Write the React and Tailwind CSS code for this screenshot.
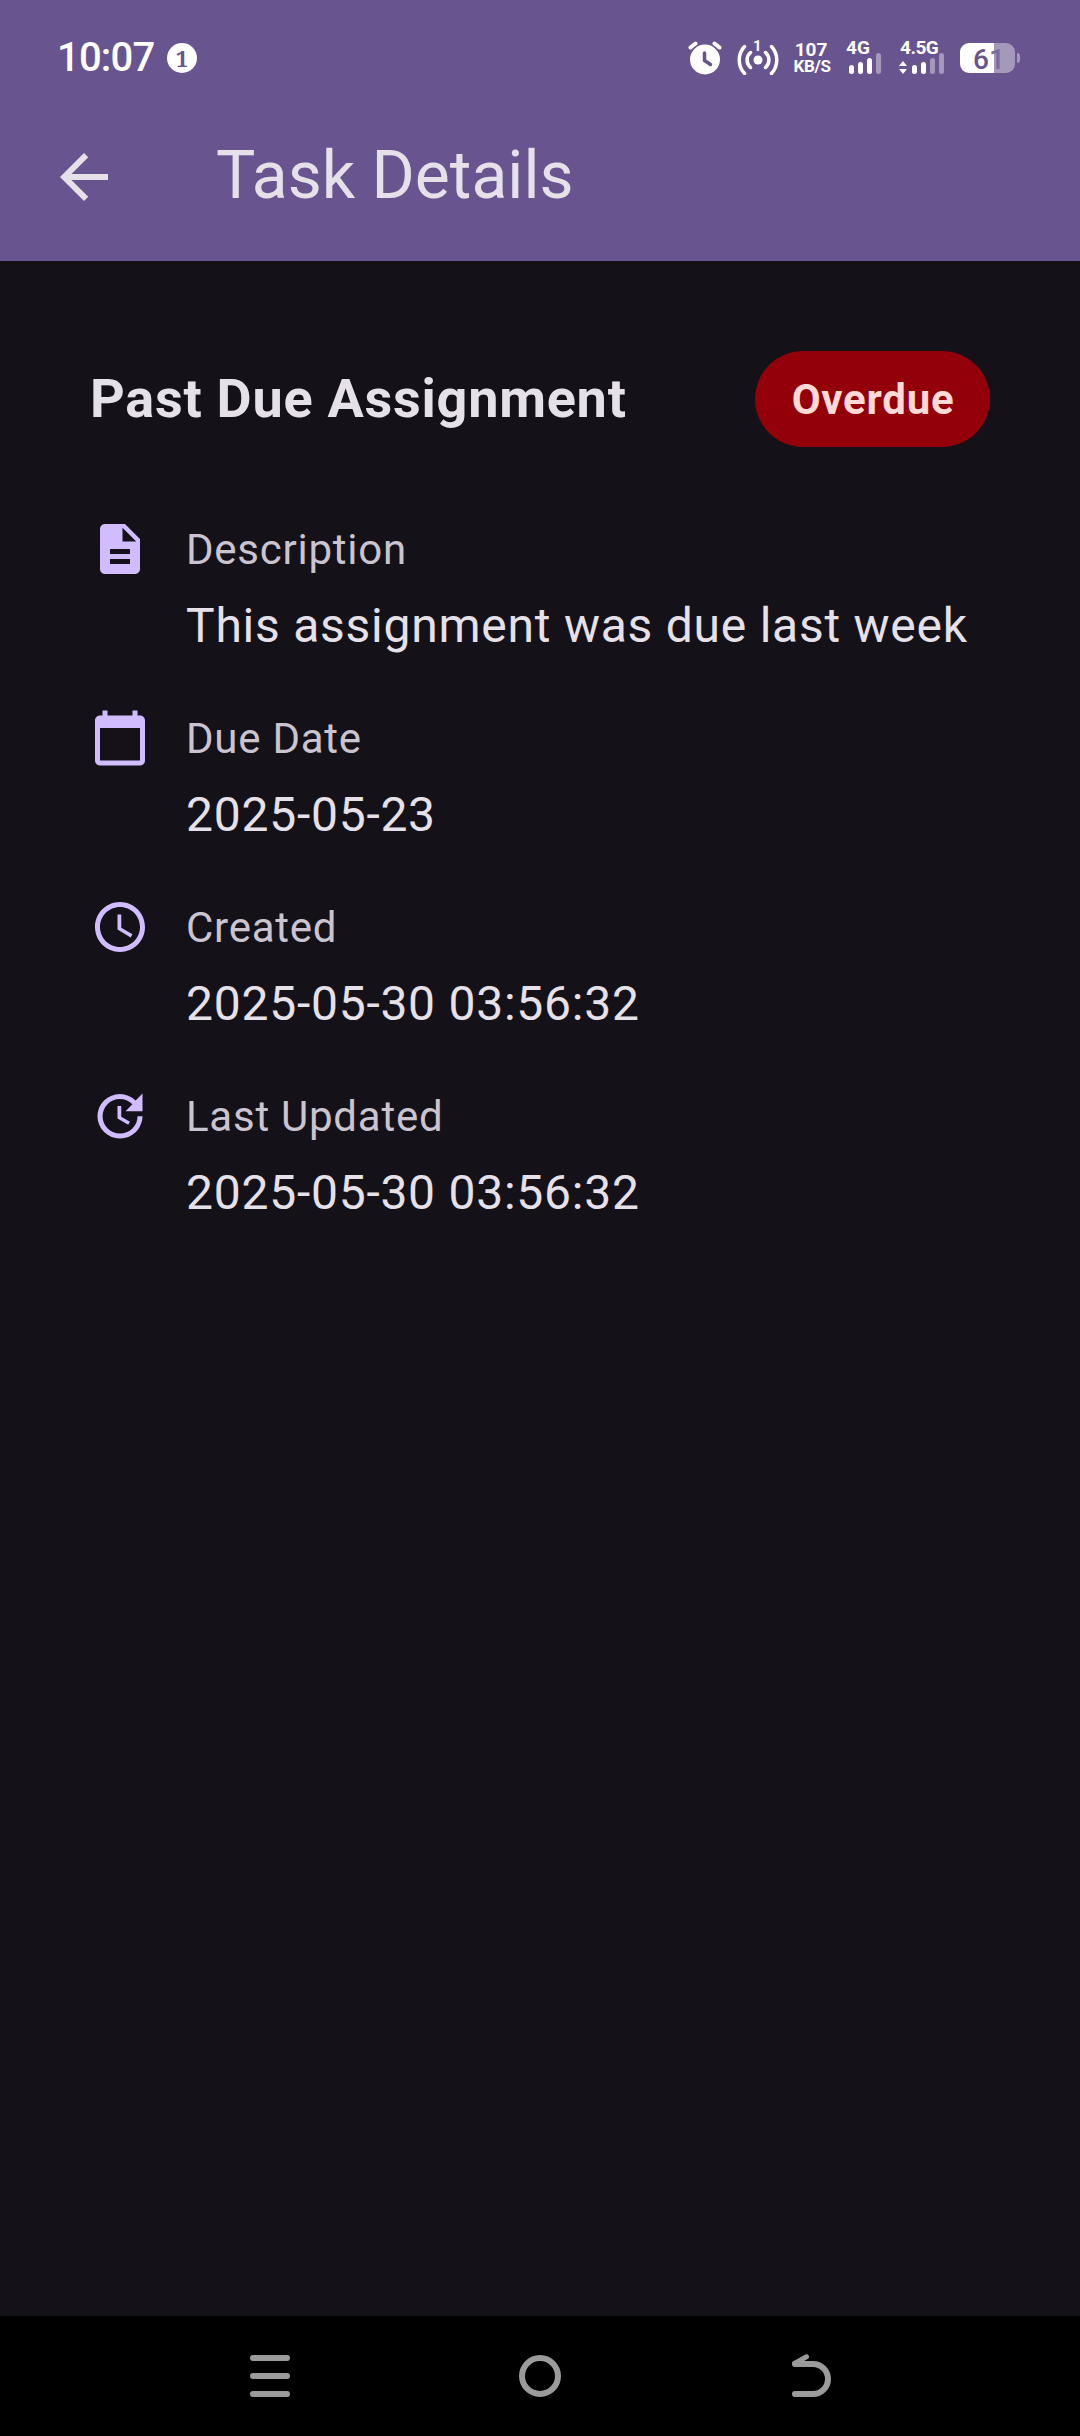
import React from "react";

const Icon = ({ d, className }) => (
  <svg viewBox="0 0 24 24" className={className} fill="currentColor">
    <path d={d} />
  </svg>
);

const ARROW = "M20 11H7.83l5.59-5.59L12 4l-8 8 8 8 1.41-1.41L7.83 13H20z";
const DOC = "M14 2H6c-1.1 0-1.99.9-1.99 2L4 20c0 1.1.89 2 1.99 2H18c1.1 0 2-.9 2-2V8zm2 16H8v-2h8zm0-4H8v-2h8zm-3-5V3.5L18.5 9z";
const CALENDAR = "M20 3h-1V1h-2v2H7V1H5v2H4c-1.100 0-2 .9-2 2v16c0 1.100.9 2 2 2h16c1.100 0 2-.9 2-2V5c0-1.100-.9-2-2-2zm0 18H4V8h16z";
const CLOCK = "M11.990 2C6.470 2 2 6.480 2 12s4.470 10 9.990 10C17.520 22 22 17.520 22 12S17.520 2 11.990 2zM12 20c-4.420 0-8-3.580-8-8s3.580-8 8-8 8 3.580 8 8-3.580 8-8 8zM12.500 7H11v6l5.250 3.150.750-1.230-4.500-2.670z";
const UPDATE = "M21 10.120h-6.780l2.740-2.820c-2.730-2.700-7.150-2.800-9.880-.100-2.730 2.710-2.730 7.080 0 9.790s7.150 2.710 9.880 0C18.320 15.650 19 14.080 19 12.100h2c0 1.980-.880 4.550-2.640 6.290-3.510 3.480-9.210 3.480-12.720 0-3.500-3.470-3.530-9.110-.020-12.580s9.140-3.470 12.650 0L21 3zM12.500 8v4.250l3.500 2.080-.720 1.210L11 13V8z";

const rows = [
  { icon: DOC, label: "Description", value: "This assignment was due last week" },
  { icon: CALENDAR, label: "Due Date", value: "2025-05-23" },
  { icon: CLOCK, label: "Created", value: "2025-05-30 03:56:32" },
  { icon: UPDATE, label: "Last Updated", value: "2025-05-30 03:56:32" },
];

function StatusBar() {
  return (
    <div className="flex h-[116px] items-center justify-between pl-[57px] pr-[60px] text-white">
      <div className="flex items-center gap-[12px]">
        <span className="w-[98px] text-[40px] leading-none font-medium tracking-[-0.8px]">10:07</span>
        <span className="flex size-[30px] items-center justify-center rounded-full bg-white font-['Noto_Serif','Liberation_Serif',serif] text-[22px] leading-none font-bold text-[#68548e]">1</span>
      </div>
      <div className="flex h-[34px] items-start">
        <svg className="mr-[15px] h-[34px] w-[34px]" viewBox="0 0 34 34">
          <circle cx="17" cy="18.500" r="15" fill="#fff" />
          <path d="M2.500 6.500 7.500 2.500M31.500 6.500 26.500 2.500" stroke="#fff" strokeWidth="4" strokeLinecap="round" />
          <path d="M16.500 12v7.500l6 4" stroke="#68548e" strokeWidth="3.500" strokeLinecap="round" strokeLinejoin="round" fill="none" />
        </svg>
        <div className="relative mr-[14px] h-[34px] w-[42px]">
          <svg className="h-[34px] w-[42px]" viewBox="0 0 42 34" fill="none" stroke="#fff" strokeWidth="3.500" strokeLinecap="round">
            <circle cx="21" cy="19" r="4.500" fill="#fff" stroke="none" />
            <path d="M7.500 5.500C.5 13 .5 25 7.500 32.500M34.500 5.500C41.500 13 41.500 25 34.500 32.500" />
            <path d="M13.500 11.500c-4.500 4-4.500 11 0 15M28.500 11.500c4.500 4 4.500 11 0 15" />
          </svg>
          <span className="absolute top-[-2px] left-[16px] text-[15px] leading-none font-bold">1</span>
        </div>
        <div className="mr-[15px] w-[38px] text-center font-bold">
          <div className="pr-[2px] text-[19px] leading-[17px]">107</div>
          <div className="text-[17px] leading-[17px] tracking-[-0.3px]">KB/S</div>
        </div>
        <div className="mr-[17px] h-[34px] w-[36px]">
          <div className="h-[14px] text-[19px] leading-[14px] font-bold">4G</div>
          <svg className="mt-[-3px] h-[22px] w-[36px]" viewBox="0 0 36 22" fill="#fff">
            <rect x="3" y="13" width="5" height="9" rx="2.500" />
            <rect x="12" y="10" width="5" height="12" rx="2.500" />
            <rect x="21" y="6" width="5" height="16" rx="2.500" />
            <rect x="30" y="1" width="5" height="21" rx="2.500" opacity=".4" />
          </svg>
        </div>
        <div className="mr-[16px] h-[34px] w-[45px]">
          <div className="h-[14px] pl-px text-[19px] leading-[14px] font-bold tracking-[-0.5px]">4.5G</div>
          <svg className="mt-[-3px] h-[22px] w-[45px]" viewBox="0 0 45 22" fill="#fff">
            <path d="M4 9l4 5H0zM4 22l4-5H0z" />
            <rect x="13" y="13" width="5" height="9" rx="2.500" />
            <rect x="22" y="10" width="5" height="12" rx="2.500" />
            <rect x="31" y="6" width="5" height="16" rx="2.500" opacity=".4" />
            <rect x="40" y="1" width="5" height="21" rx="2.500" opacity=".4" />
          </svg>
        </div>
        <div className="mt-[2px] flex items-center">
          <div className="flex h-[30px] w-[55px] items-center justify-center rounded-[9px] bg-linear-to-r from-white from-[62%] to-[#a498bb] to-[62%] pt-[3px] pl-[3px] text-[28px] leading-none font-medium text-[#68548e]">
            <span>6<span className="text-[#7b6a9c]">1</span></span>
          </div>
          <div className="ml-[2px] h-[10px] w-[3px] rounded-r-full bg-[#a498bb]" />
        </div>
      </div>
    </div>
  );
}

export default function App() {
  return (
    <div className="flex h-[2436px] w-[1080px] flex-col bg-[#141218] font-[Roboto,sans-serif] text-[#e6e0e9]">
      <header className="h-[261px] bg-[#68548e]">
        <StatusBar />
        <div className="flex h-[122px] items-center pl-12">
          <Icon d={ARROW} className="size-[72px] shrink-0" />
          <h1 className="mb-[2px] ml-[96px] text-[66px] leading-[84px] font-normal">Task Details</h1>
        </div>
      </header>
      <main className="flex-1 px-[90px] pt-[90px]">
        <div className="flex h-[96px] items-center justify-between">
          <h2 className="text-[54px] leading-[72px] font-bold tracking-[0.75px]">Past Due Assignment</h2>
          <span className="flex h-[96px] w-[235px] items-center justify-center rounded-full bg-[#93000a] pl-px text-[42px] font-bold tracking-[0.75px] text-[#ffdad6]">Overdue</span>
        </div>
        <div className="mt-[72px]">
          {rows.map((r) => (
            <div key={r.label} className="flex h-[189px]">
              <Icon d={r.icon} className="size-[60px] shrink-0 text-[#d0bcff]" />
              <div className="ml-[36px] pt-px">
                <div className="text-[42px] leading-[60px] tracking-[0.75px] text-[#cac4d0]">{r.label}</div>
                <div className="mt-[10px] text-[48px] leading-[72px] tracking-[0.75px] whitespace-nowrap">{r.value}</div>
              </div>
            </div>
          ))}
        </div>
      </main>
      <nav className="flex h-[120px] items-center justify-between bg-black px-[249px] text-[#9b9b9b]">
        <svg className="h-[44px] w-[42px]" viewBox="0 0 42 44" stroke="currentColor" strokeWidth="6" strokeLinecap="round">
          <path d="M4 4h34M4 22h34M4 40h34" />
        </svg>
        <svg className="h-[44px] w-[42px]" viewBox="0 0 42 44" stroke="currentColor" strokeWidth="6" fill="none">
          <circle cx="21" cy="22" r="18" />
        </svg>
        <svg className="h-[44px] w-[42px]" viewBox="0 0 42 44" stroke="currentColor" strokeWidth="6" fill="none" strokeLinecap="round">
          <path d="M6 10h18a15 15 0 0 1 0 30H6" />
          <path d="M5.500 9.500 17.500 2.800" strokeWidth="5" />
        </svg>
      </nav>
    </div>
  );
}
